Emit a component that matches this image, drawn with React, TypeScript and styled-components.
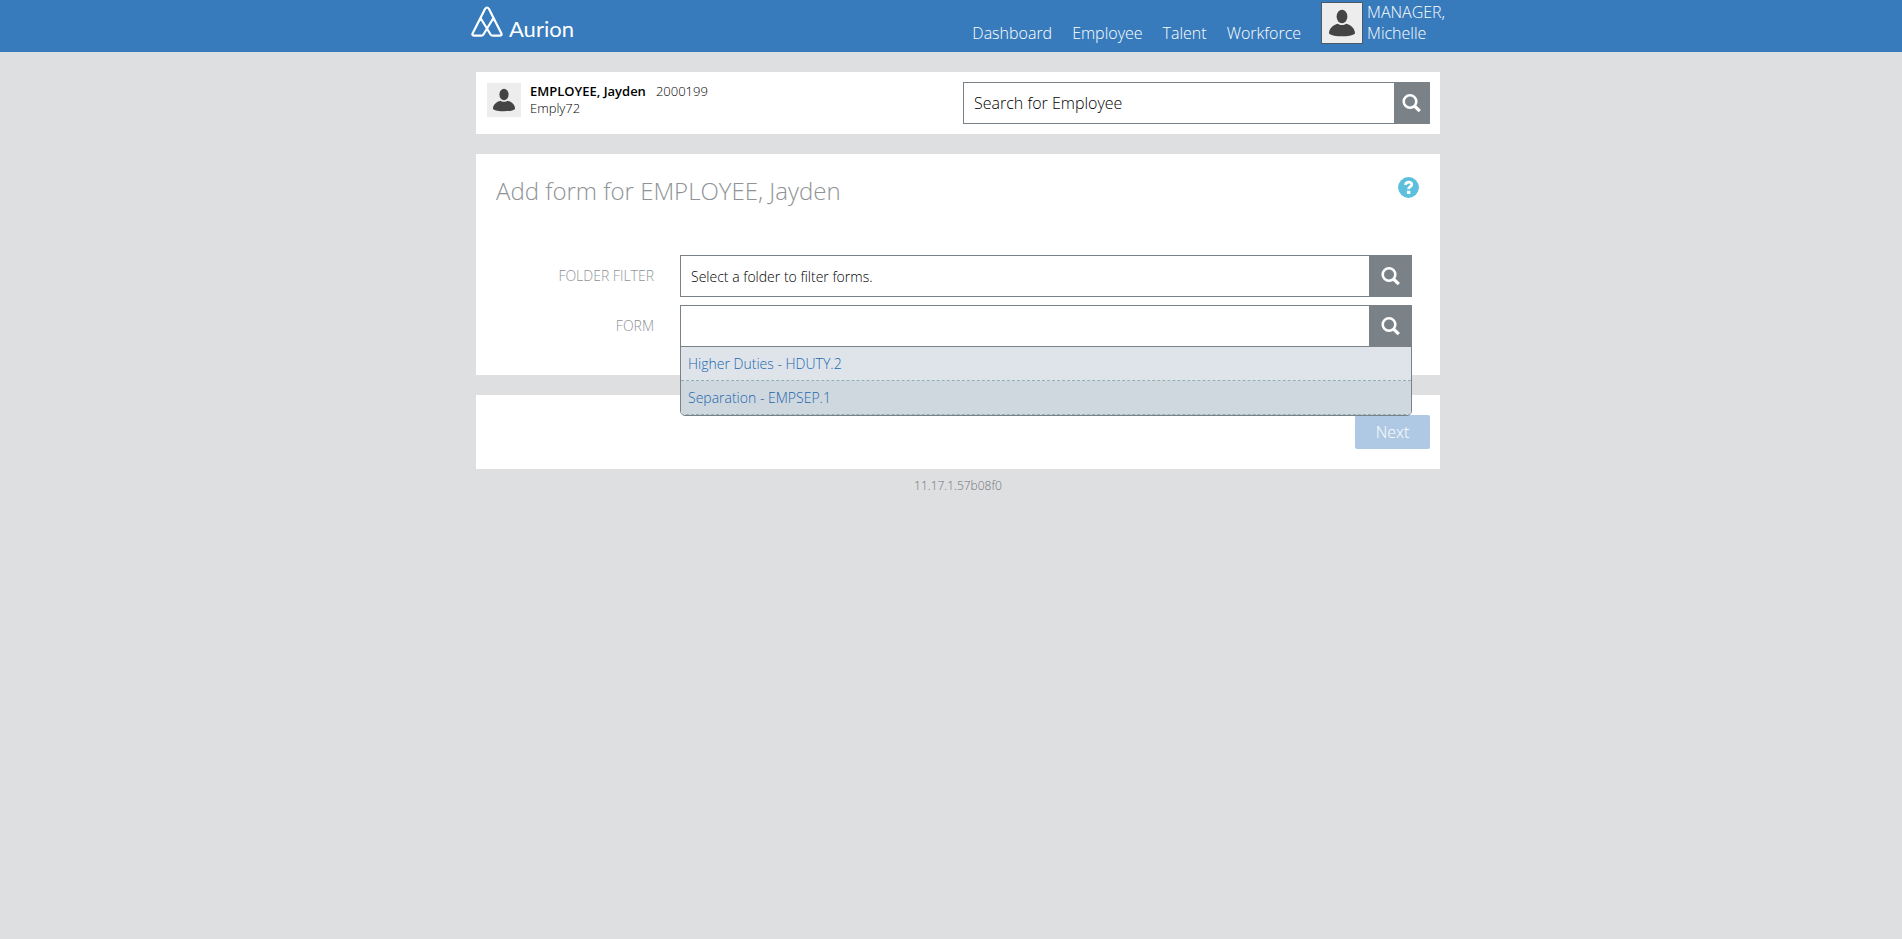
import React from 'react';
import styled, { createGlobalStyle, css } from 'styled-components';

const colors = {
  header: '#377bbc',
  page: '#dedfe1',
  steel: '#7b8287',
  muted: '#8f9396',
};

const GlobalStyle = createGlobalStyle`
  *, *::before, *::after { box-sizing: border-box; }
  body {
    margin: 0;
    background: ${colors.page};
    color: #000;
    font-family: 'Open Sans', 'Noto Sans', sans-serif;
    font-weight: 300;
    font-size: 14px;
  }
  button, input { font: inherit; }
`;

const Header = styled.header`
  height: 52px;
  padding-left: 14px;
  background: ${colors.header};
`;

const HeaderInner = styled.div`
  display: flex;
  align-items: flex-start;
  justify-content: space-between;
  max-width: 974px;
  margin: 0 auto;
`;

const Brand = styled.a`
  display: flex;
  align-items: flex-end;
  gap: 6px;
  padding-top: 6px;
  color: #fff;
  text-decoration: none;
`;

const BrandName = styled.span`
  font-family: Lato, sans-serif;
  font-weight: 400;
  font-size: 22px;
  line-height: 18px;
`;

const Nav = styled.nav`
  display: flex;
  align-items: flex-start;
  gap: 20px;
`;

const NavLink = styled.a`
  padding-top: 22px;
  font-size: 16px;
  line-height: 22px;
  color: #fff;
  text-decoration: none;
`;

const UserLink = styled.a`
  display: flex;
  gap: 4px;
  padding-top: 2px;
  font-size: 16px;
  line-height: 21px;
  color: #fff;
  text-decoration: none;
`;

const Avatar = styled.span<{ $size: number; $framed?: boolean }>`
  display: flex;
  flex: none;
  width: ${(p) => p.$size}px;
  height: ${(p) => p.$size}px;
  background: #eeedee;
  ${(p) =>
    p.$framed &&
    css`
      border: 1px solid #4c5a66;
    `}
  svg {
    width: 100%;
    height: 100%;
  }
`;

const Main = styled.main`
  padding: 20px 0 0 14px;
`;

const Column = styled.div`
  display: flex;
  flex-direction: column;
  gap: 20px;
  max-width: 964px;
  margin: 0 auto;
`;

const Card = styled.section`
  background: #fff;
`;

const EmployeeCard = styled(Card)`
  display: flex;
  justify-content: space-between;
  padding: 10px;
`;

const EmployeeInfo = styled.div`
  display: flex;
  gap: 9px;
  padding: 1px;
  font-size: 13px;
  line-height: 17px;
`;

const EmployeeName = styled.strong`
  margin-right: 10px;
  font-weight: 600;
`;

const SearchBox = styled.div<{ $width?: string }>`
  display: flex;
  position: relative;
  width: ${(p) => p.$width ?? '100%'};
  height: 42px;
`;

const TextInput = styled.input<{ $size: number }>`
  flex: 1;
  min-width: 0;
  padding: 0 10px;
  border: 1px solid ${colors.steel};
  border-right: 0;
  border-radius: 0;
  outline: 0;
  background: #fff;
  font-size: ${(p) => p.$size}px;
  color: #000;
  &::placeholder {
    color: #000;
    opacity: 1;
  }
`;

const IconButton = styled.button<{ $width: number }>`
  display: flex;
  align-items: center;
  justify-content: center;
  width: ${(p) => p.$width}px;
  padding: 0;
  border: 0;
  background: ${colors.steel};
  cursor: pointer;
`;

const FormCard = styled(Card)`
  padding: 20px 20px 28px;
`;

const TitleRow = styled.div`
  display: flex;
  justify-content: space-between;
  align-items: flex-start;
  margin-bottom: 47px;
`;

const Title = styled.h1`
  margin: 0;
  font-size: 24px;
  line-height: 34px;
  font-weight: 300;
  color: ${colors.muted};
`;

const HelpButton = styled.button`
  display: flex;
  margin: 3px 1px 0 0;
  padding: 0;
  border: 0;
  background: none;
  cursor: pointer;
`;

const Field = styled.div`
  display: grid;
  grid-template-columns: 158px 1fr;
  column-gap: 26px;
  align-items: center;
  padding-right: 8px;
  margin-bottom: 8px;
  &:last-child {
    margin-bottom: 0;
  }
`;

const Label = styled.label`
  text-align: right;
  font-size: 14px;
  line-height: 20px;
  color: ${colors.muted};
`;

const Options = styled.ul`
  position: absolute;
  z-index: 1;
  top: 41px;
  left: 0;
  right: 0;
  margin: 0;
  padding: 0;
  overflow: hidden;
  list-style: none;
  border: 1px solid ${colors.steel};
  border-radius: 0 0 5px 5px;
`;

const Option = styled.li<{ $active?: boolean }>`
  padding: 7px;
  border-bottom: 1px dashed #8fb0b4;
  background: ${(p) => (p.$active ? '#cfd8df' : '#dfe4eb')};
  font-size: 14px;
  line-height: 19px;
  color: #2167ad;
  cursor: pointer;
`;

const ActionCard = styled(Card)`
  display: flex;
  justify-content: flex-end;
  padding: 20px 10px;
`;

const NextButton = styled.button`
  width: 75px;
  height: 34px;
  padding: 0;
  border: 0;
  border-radius: 2px;
  background: #afc9e4;
  font-size: 16px;
  color: #fff;
`;

const Version = styled.footer`
  padding: 8px 0;
  text-align: center;
  font-size: 12px;
  line-height: 17px;
  color: #6f7478;
`;

const Person = () => (
  <svg viewBox="0 0 40 40" fill="#444" aria-hidden="true">
    <ellipse cx="20" cy="13.5" rx="5.4" ry="6.8" />
    <path d="M7 30.500c0-5 4-8.500 9-9.700 1.500 1.600 6.500 1.600 8 0 5 1.200 9 4.700 9 9.700-4 3.800-22 3.800-26 0z" />
  </svg>
);

const Magnifier = () => (
  <svg width="20" height="20" viewBox="0 0 20 20" fill="none" stroke="#fff" aria-hidden="true">
    <circle cx="8" cy="8.500" r="6.300" strokeWidth="2.600" />
    <path d="M12.500 13l5.300 5.200" strokeWidth="3.200" />
  </svg>
);

const LogoMark = () => (
  <svg width="32" height="32" viewBox="0 0 32 32" fill="none" stroke="#fff" strokeWidth="2.200" strokeLinejoin="round" strokeLinecap="round" aria-hidden="true">
    <path d="M22.300 12.300L12.600 28.200Q11.800 29.600 10.200 29.600H3.400Q0.600 29.600 1.700 27.200L14 3Q16 0 18 3L30.300 27.200Q31.400 29.600 28.600 29.600H21.800Q20.200 29.600 19.400 28.200L9.700 12.300" />
  </svg>
);

const Help = () => (
  <svg width="21" height="21" viewBox="0 0 21 21" aria-hidden="true">
    <circle cx="10.500" cy="10.500" r="10.400" fill="#5bbfdd" />
    <path d="M7.600 8c0-4 6.200-3.700 6.200-.6 0 2.200-3.200 2.200-3.200 4.700" fill="none" stroke="#fff" strokeWidth="2.800" />
    <path d="M8.900 13.600h3.400v3.400H8.900z" fill="#fff" />
  </svg>
);

const navItems = ['Dashboard', 'Employee', 'Talent', 'Workforce'];
const forms = ['Higher Duties - HDUTY.2', 'Separation - EMPSEP.1'];

export default function App() {
  return (
    <>
      <GlobalStyle />
      <Header>
        <HeaderInner>
          <Brand href="#">
            <LogoMark />
            <BrandName>Aurion</BrandName>
          </Brand>
          <Nav>
            {navItems.map((item) => (
              <NavLink href="#" key={item}>
                {item}
              </NavLink>
            ))}
            <UserLink href="#">
              <Avatar $size={42} $framed>
                <Person />
              </Avatar>
              <span>
                MANAGER,
                <br />
                Michelle
              </span>
            </UserLink>
          </Nav>
        </HeaderInner>
      </Header>
      <Main>
        <Column>
          <EmployeeCard>
            <EmployeeInfo>
              <Avatar $size={34}>
                <Person />
              </Avatar>
              <div>
                <EmployeeName>EMPLOYEE, Jayden</EmployeeName>
                <span>2000199</span>
                <div>Emply72</div>
              </div>
            </EmployeeInfo>
            <SearchBox $width="467px">
              <TextInput $size={16} aria-label="Search for Employee" placeholder="Search for Employee" />
              <IconButton $width={36} type="button" aria-label="Search">
                <Magnifier />
              </IconButton>
            </SearchBox>
          </EmployeeCard>

          <FormCard>
            <TitleRow>
              <Title>Add form for EMPLOYEE, Jayden</Title>
              <HelpButton type="button" aria-label="Help">
                <Help />
              </HelpButton>
            </TitleRow>
            <Field>
              <Label htmlFor="folder">FOLDER FILTER</Label>
              <SearchBox>
                <TextInput id="folder" $size={14} placeholder="Select a folder to filter forms." />
                <IconButton $width={43} type="button" aria-label="Search folders">
                  <Magnifier />
                </IconButton>
              </SearchBox>
            </Field>
            <Field>
              <Label htmlFor="form">FORM</Label>
              <SearchBox>
                <TextInput id="form" $size={14} />
                <IconButton $width={43} type="button" aria-label="Search forms">
                  <Magnifier />
                </IconButton>
                <Options role="listbox" aria-label="Forms">
                  {forms.map((form, i) => (
                    <Option role="option" aria-selected={i === 1} $active={i === 1} key={form}>
                      {form}
                    </Option>
                  ))}
                </Options>
              </SearchBox>
            </Field>
          </FormCard>

          <ActionCard>
            <NextButton type="button">Next</NextButton>
          </ActionCard>
        </Column>
        <Version>11.17.1.57b08f0</Version>
      </Main>
    </>
  );
}
